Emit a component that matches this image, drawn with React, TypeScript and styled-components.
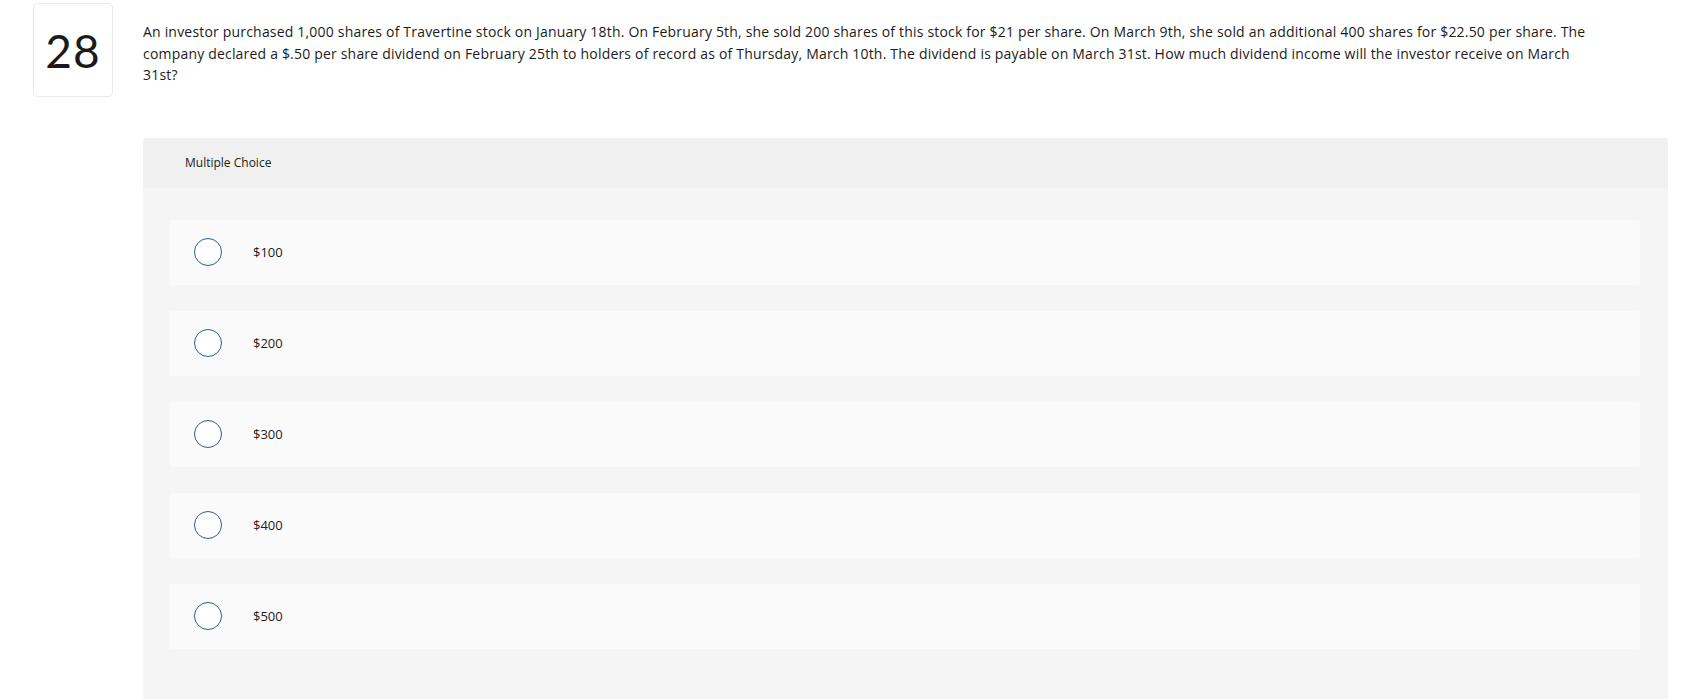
import React from "react";
import styled, { createGlobalStyle } from "styled-components";

const Global = createGlobalStyle`
  html, body { margin: 0; padding: 0; background: #ffffff; }
  body { font-family: "Open Sans", Lato, Arial, sans-serif; color: #1c1c1c; }
`;

const Page = styled.div`
  padding: 3px 25px 0 33px;
`;

const QuestionRow = styled.div`
  display: flex;
  align-items: flex-start;
  gap: 30px;
`;

const NumberBox = styled.div`
  flex: none;
  width: 80px;
  height: 94px;
  box-sizing: border-box;
  border: 1px solid #e9e9e9;
  border-radius: 5px;
  display: flex;
  align-items: center;
  justify-content: center;
  font-family: Lato, sans-serif;
  font-size: 46px;
  color: #1a1a1a;
  letter-spacing: 1px;
`;

const Content = styled.div`
  flex: 1;
  min-width: 0;
`;

const Prompt = styled.p`
  margin: 0;
  padding: 18px 70px 0 0;
  font-size: 14px;
  line-height: 21.5px;
  letter-spacing: 0.19px;
  color: #1c1c1c;
`;

const Panel = styled.section`
  margin-top: 52px;
  background: #f5f5f5;
  border-radius: 3px 3px 0 0;
  padding-bottom: 50px;
`;

const PanelHeader = styled.div`
  height: 50px;
  display: flex;
  align-items: center;
  padding-left: 42px;
  background: #f0f0f0;
  border-radius: 3px 3px 0 0;
  font-size: 12px;
  color: #222;
`;

const Choices = styled.div`
  display: flex;
  flex-direction: column;
  gap: 26px;
  padding: 32px 28px 0 26px;
`;

const Choice = styled.label`
  height: 65px;
  display: flex;
  align-items: center;
  background: #fafafa;
  border-radius: 3px;
  padding-left: 25px;
  cursor: pointer;
`;

const Radio = styled.span`
  width: 28px;
  height: 28px;
  box-sizing: border-box;
  border: 1.5px solid #2d5d8c;
  border-radius: 50%;
  background: #ffffff;
  flex: none;
`;

const ChoiceLabel = styled.span`
  margin-left: 31px;
  font-size: 13px;
  color: #1c1c1c;
`;

const options = ["$100", "$200", "$300", "$400", "$500"];

export default function App() {
  return (
    <>
      <Global />
      <Page>
        <QuestionRow>
          <NumberBox>28</NumberBox>
          <Content>
            <Prompt>
              An investor purchased 1,000 shares of Travertine stock on January 18th. On February 5th, she sold 200 shares of this stock for $21 per share. On March 9th, she sold an additional 400 shares for $22.50 per share. The company declared a $.50 per share dividend on February 25th to holders of record as of Thursday, March 10th. The dividend is payable on March 31st. How much dividend income will the investor receive on March 31st?
            </Prompt>
            <Panel>
              <PanelHeader>Multiple Choice</PanelHeader>
              <Choices>
                {options.map((o) => (
                  <Choice key={o}>
                    <Radio />
                    <ChoiceLabel>{o}</ChoiceLabel>
                  </Choice>
                ))}
              </Choices>
            </Panel>
          </Content>
        </QuestionRow>
      </Page>
    </>
  );
}
